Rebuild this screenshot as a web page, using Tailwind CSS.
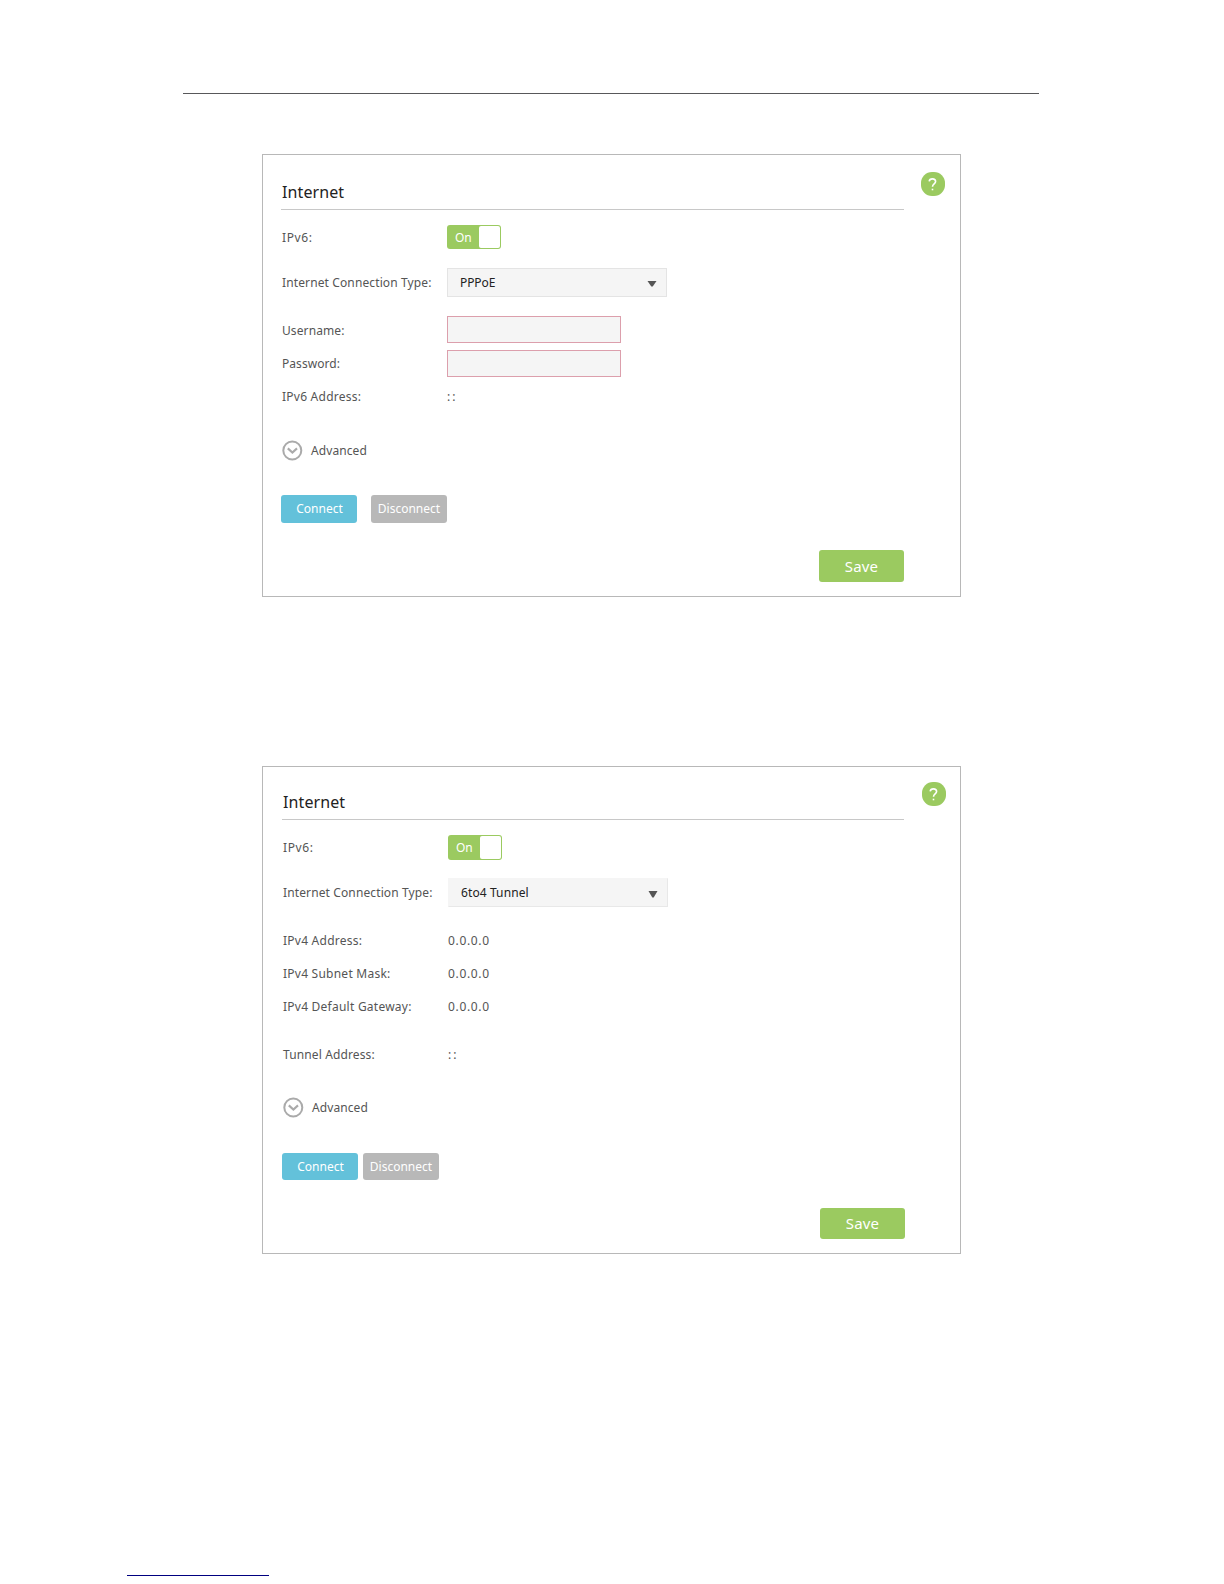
<!DOCTYPE html>
<html lang="en">
<head>
  <meta charset="UTF-8">
  <meta name="viewport" content="width=device-width, initial-scale=1.0">
  <title>Internet - IPv6</title>
  <script src="https://cdn.jsdelivr.net/npm/@tailwindcss/browser@4"></script>
</head>
<body class="bg-white font-['Noto_Sans',sans-serif] text-[12px] leading-4 tracking-[0.24px] text-[#555]">
  <div class="h-[1584px] overflow-hidden">

    <!-- Page header rule -->
    <header class="ml-[183px] w-[856px] pt-[93px]">
      <div class="h-px bg-[#58585a]"></div>
    </header>

    <!-- PPPoE -->
    <section class="relative ml-[262px] mt-[60px] h-[443px] w-[699px] border border-[#b8b8b8] pl-[18px] pr-[56px]">
      <div class="absolute right-[15px] top-[17px] flex size-6 items-center justify-center rounded-[11px] bg-[#9bca60]">
        <svg class="mr-px h-[13px] w-[9px]" viewBox="0 0 9 13" fill="none" stroke="#fff" stroke-width="1.6">
          <path d="M1.2 3.4C1.4 1.8 2.7.9 4.4.9c1.9 0 3.2 1.1 3.2 2.7 0 2.3-3.1 2.5-3.1 5.1"/>
          <path d="M4.5 10.7v1.6"/>
        </svg>
      </div>

      <div class="h-[55px] border-b border-[#c8c8c8] pt-[27px]">
        <h2 class="pl-px text-[16px] leading-5 tracking-[0.1px] text-[#222]">Internet</h2>
      </div>

      <div class="mt-[15px] flex h-6 items-center">
        <span class="w-[166px] pl-px pt-[2px] tracking-[0.6px]">IPv6:</span>
        <div class="flex h-6 w-[54px] justify-between rounded-[3px] bg-[#9bca60] p-px">
          <span class="pl-[7px] pt-[4px] tracking-normal text-white">On</span>
          <span class="w-[21px] rounded-[2px] bg-white"></span>
        </div>
      </div>

      <div class="mt-[19px] flex h-[29px] items-center">
        <span class="w-[166px] whitespace-nowrap pl-px pt-px tracking-[0.12px]">Internet Connection Type:</span>
        <div class="flex h-[29px] w-[220px] items-center justify-between border border-[#e4e4e4] bg-[#f5f5f5] pl-3 pr-[9px] text-[#222]">
          <span class="pt-px tracking-[-0.1px]">PPPoE</span>
          <svg class="mt-[2px] h-[6px] w-[10px]" viewBox="0 0 10 6"><path d="M.5 0h9L5.7 5.5H4.3z" fill="#555"/></svg>
        </div>
      </div>

      <div class="mt-[19px] flex h-[27px] items-center">
        <span class="w-[166px] pl-px pt-[3px] tracking-[0.1px]">Username:</span>
        <div class="h-[27px] w-[174px] border border-[#dc9fac] bg-[#f5f5f5]"></div>
      </div>
      <div class="mt-[7px] flex h-[27px] items-center">
        <span class="w-[166px] pl-px tracking-[0.05px]">Password:</span>
        <div class="h-[27px] w-[174px] border border-[#dc9fac] bg-[#f5f5f5]"></div>
      </div>
      <div class="mt-[7px] flex h-[26px] items-center">
        <span class="w-[166px] pl-px">IPv6 Address:</span>
        <span class="tracking-[2px]">::</span>
      </div>

      <div class="mt-[30px] flex h-[21px] items-center pl-px">
        <svg class="size-[21px]" viewBox="0 0 21 21" fill="none" stroke="#aaa">
          <circle cx="10.3" cy="10.5" r="9" stroke-width="2"/>
          <path d="M5.8 8.4l4.6 4.1 4.6-4.1" stroke-width="2.1"/>
        </svg>
        <span class="pl-[8px] tracking-[0.08px]">Advanced</span>
      </div>

      <div class="mt-[34px] flex gap-[14px] tracking-normal text-white">
        <button class="h-7 w-[76px] rounded-[3px] bg-[#63c1da] pl-px">Connect</button>
        <button class="h-7 w-[76px] rounded-[3px] bg-[#b8b8b8]">Disconnect</button>
      </div>

      <div class="mt-[27px] flex justify-end">
        <button class="h-8 w-[85px] rounded-[3px] bg-[#9bca60] pb-px text-[15px] tracking-[0.2px] text-white">Save</button>
      </div>
    </section>

    <!-- 6to4 Tunnel -->
    <section class="relative ml-[262px] mt-[169px] h-[488px] w-[699px] border border-[#b8b8b8] pl-[19px] pr-[56px]">
      <div class="absolute right-[14px] top-[15px] flex size-6 items-center justify-center rounded-[11px] bg-[#9bca60]">
        <svg class="mr-px h-[13px] w-[9px]" viewBox="0 0 9 13" fill="none" stroke="#fff" stroke-width="1.6">
          <path d="M1.2 3.4C1.4 1.8 2.7.9 4.4.9c1.9 0 3.2 1.1 3.2 2.7 0 2.3-3.1 2.5-3.1 5.1"/>
          <path d="M4.5 10.7v1.6"/>
        </svg>
      </div>

      <div class="h-[53px] border-b border-[#c8c8c8] pt-[25px]">
        <h2 class="pl-px text-[16px] leading-5 tracking-[0.1px] text-[#222]">Internet</h2>
      </div>

      <div class="mt-[15px] flex h-[25px] items-center">
        <span class="w-[166px] pl-px tracking-[0.6px]">IPv6:</span>
        <div class="flex h-[25px] w-[54px] justify-between rounded-[3px] bg-[#9bca60] p-px">
          <span class="pl-[7px] pt-[4px] tracking-normal text-white">On</span>
          <span class="w-[21px] rounded-[2px] bg-white"></span>
        </div>
      </div>

      <div class="mt-[18px] flex h-[29px] items-center">
        <span class="w-[166px] whitespace-nowrap pl-px pt-px tracking-[0.12px]">Internet Connection Type:</span>
        <div class="flex h-[29px] w-[220px] items-center justify-between border border-l-[#f5f5f5] border-t-[#f5f5f5] border-[#e8e8e8] bg-[#f5f5f5] pl-3 pr-[9px] text-[#222]">
          <span class="pt-px tracking-[0.1px]">6to4 Tunnel</span>
          <svg class="mt-[3px] h-[7px] w-[10px]" viewBox="0 0 10 7"><path d="M.5 0h9L5.7 6.5H4.3z" fill="#555"/></svg>
        </div>
      </div>

      <div class="mt-[17px] flex h-[33px] items-center">
        <span class="w-[166px] pl-px">IPv4 Address:</span>
        <span class="tracking-[0.65px]">0.0.0.0</span>
      </div>
      <div class="flex h-[33px] items-center">
        <span class="w-[166px] pl-px">IPv4 Subnet Mask:</span>
        <span class="tracking-[0.65px]">0.0.0.0</span>
      </div>
      <div class="flex h-[33px] items-center">
        <span class="w-[166px] pl-px">IPv4 Default Gateway:</span>
        <span class="tracking-[0.65px]">0.0.0.0</span>
      </div>
      <div class="mt-[15px] flex h-[33px] items-center">
        <span class="w-[166px] pl-px tracking-[0.12px]">Tunnel Address:</span>
        <span class="tracking-[2px]">::</span>
      </div>

      <div class="mt-[26px] flex h-[21px] items-center pl-px">
        <svg class="size-[21px]" viewBox="0 0 21 21" fill="none" stroke="#aaa">
          <circle cx="10.3" cy="10.5" r="9" stroke-width="2"/>
          <path d="M5.8 8.4l4.6 4.1 4.6-4.1" stroke-width="2.1"/>
        </svg>
        <span class="pl-[8px] tracking-[0.08px]">Advanced</span>
      </div>

      <div class="mt-[35px] flex gap-[5px] tracking-normal text-white">
        <button class="h-[27px] w-[76px] rounded-[3px] bg-[#63c1da] pl-px">Connect</button>
        <button class="h-[27px] w-[76px] rounded-[3px] bg-[#b8b8b8]">Disconnect</button>
      </div>

      <div class="-mr-px mt-[28px] flex justify-end">
        <button class="h-[31px] w-[85px] rounded-[3px] bg-[#9bca60] pb-[2px] text-[15px] tracking-[0.2px] text-white">Save</button>
      </div>
    </section>

    <!-- Footer link underline -->
    <footer class="ml-[127px] mt-[321px] w-[142px]">
      <div class="h-px bg-[#000080]"></div>
    </footer>
  </div>
</body>
</html>
